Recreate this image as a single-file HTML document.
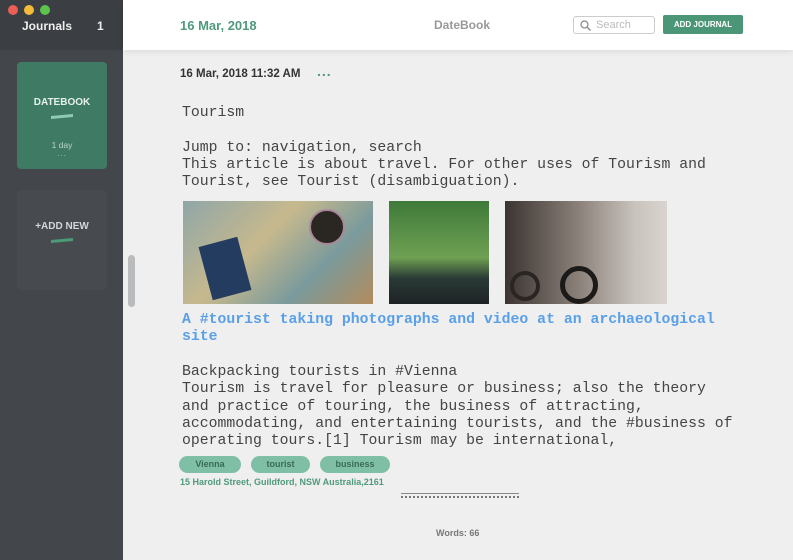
<!DOCTYPE html>
<html><head><style>
*{margin:0;padding:0;box-sizing:border-box}
body{width:793px;height:560px;overflow:hidden;background:#efefef;font-family:"Liberation Sans",sans-serif;position:relative}
.side{position:absolute;left:0;top:0;width:123px;height:560px;background:#43474c}
.sidehead{position:absolute;left:0;top:0;width:123px;height:50px;background:#3b3e42}
.dot{position:absolute;top:5px;width:10px;height:10px;border-radius:50%}
.card{position:absolute;left:17px;top:62px;width:90px;height:107px;background:#3f7a64;border-radius:4px;color:#e6f0ec;text-align:center}
.add{position:absolute;left:17px;top:190px;width:90px;height:100px;background:#474b50;border-radius:4px;color:#ccd;text-align:center}
.bar{position:absolute;top:0;height:50px;background:#fff;left:123px;width:670px;box-shadow:0 2px 6px rgba(0,0,0,.08)}
.mono{position:absolute;left:182px;font-family:"Liberation Mono",monospace;font-size:14.8px;line-height:17.3px;color:#444;white-space:pre}
.tag{position:absolute;top:456px;height:17px;background:#7fbfa6;border-radius:9px;font-size:9px;font-weight:bold;color:#3a6b58;text-align:center;line-height:17px}
</style></head><body>
<div class="side">
 <div class="sidehead">
  <div class="dot" style="left:8px;background:#ec5f57"></div>
  <div class="dot" style="left:24px;background:#f3bb3a"></div>
  <div class="dot" style="left:40px;background:#5cc44c"></div>
  <div style="position:absolute;left:22px;top:19px;color:#eee;font-size:12px;font-weight:bold">Journals</div>
  <div style="position:absolute;left:97px;top:19px;color:#eee;font-size:12px;font-weight:bold">1</div>
 </div>
 <div class="card">
  <div style="margin-top:35px;font-size:10px;font-weight:bold">DATEBOOK</div>
  <div style="width:22px;height:3px;background:#8fcab2;margin:7px auto 0;transform:skewY(-5deg)"></div>
  <div style="margin-top:22px;font-size:8.5px;color:#b8d6c9">1 day</div>
  <div style="font-size:8px;color:#9cc;letter-spacing:1px;line-height:8px">...</div>
 </div>
 <div class="add">
  <div style="margin-top:31px;font-size:10px;font-weight:bold;color:#d4d6d8">+ADD NEW</div>
  <div style="width:22px;height:3px;background:#4b9a78;margin:7px auto 0;transform:skewY(-5deg)"></div>
 </div>
</div>
<div style="position:absolute;left:128px;top:255px;width:7px;height:52px;background:#b9bbbd;border-radius:4px"></div>
<div class="bar">
 <div style="position:absolute;left:57px;top:18px;color:#4f9a7c;font-size:13px;font-weight:bold">16 Mar, 2018</div>
 <div style="position:absolute;left:311px;top:18px;color:#999;font-size:12px;font-weight:bold">DateBook</div>
 <div style="position:absolute;left:450px;top:16px;width:82px;height:18px;border:1px solid #ccc;border-radius:3px;font-size:11px;color:#bbb;line-height:16px;padding-left:22px">Search
  <svg style="position:absolute;left:6px;top:3px" width="11" height="11" viewBox="0 0 11 11"><circle cx="4.5" cy="4.5" r="3.5" fill="none" stroke="#888" stroke-width="1.2"/><path d="M7 7l3.5 3.5" stroke="#888" stroke-width="1.3"/></svg></div>
 <div style="position:absolute;left:540px;top:15px;width:80px;height:19px;background:#4a9677;border-radius:2px;color:#fff;font-size:8px;font-weight:bold;text-align:center;line-height:19px">ADD JOURNAL</div>
</div>
<div style="position:absolute;left:180px;top:68px;font-size:11.5px;color:#333;font-weight:bold">16 Mar, 2018 11:32 AM</div>
<div style="position:absolute;left:317px;top:63px;font-size:14px;color:#4f9a7c;font-weight:bold;letter-spacing:1px">...</div>
<div class="mono" style="top:105px">Tourism

Jump to: navigation, search
This article is about travel. For other uses of Tourism and
Tourist, see Tourist (disambiguation).</div>
<div style="position:absolute;left:183px;top:201px;width:190px;height:103px;background:linear-gradient(135deg,#8fa6a8,#c7b98d 40%,#7a9a9c 70%,#b28b5b)"><div style="position:absolute;left:126px;top:8px;width:36px;height:36px;border-radius:50%;background:#2a2622;border:2px solid #a89"></div><div style="position:absolute;left:22px;top:40px;width:40px;height:55px;background:#233c60;transform:rotate(-15deg)"></div></div>
<div style="position:absolute;left:389px;top:201px;width:100px;height:103px;background:linear-gradient(180deg,#3f7a3a,#6ea052 55%,#2a3a36 75%,#1d2224)"></div>
<div style="position:absolute;left:505px;top:201px;width:162px;height:103px;background:linear-gradient(90deg,#3b3430,#8a8079 45%,#c9c3bd 80%,#d9d4cf)"><div style="position:absolute;left:55px;top:65px;width:38px;height:38px;border-radius:50%;border:5px solid #1c1a19"></div><div style="position:absolute;left:5px;top:70px;width:30px;height:30px;border-radius:50%;border:4px solid #2a2522"></div></div>
<div class="mono" style="top:312px;color:#5aa0e8;font-weight:bold">A #tourist taking photographs and video at an archaeological
site</div>
<div class="mono" style="top:364px">Backpacking tourists in #Vienna
Tourism is travel for pleasure or business; also the theory
and practice of touring, the business of attracting,
accommodating, and entertaining tourists, and the #business of
operating tours.[1] Tourism may be international,</div>
<div class="tag" style="left:179px;width:62px">Vienna</div>
<div class="tag" style="left:251px;width:59px">tourist</div>
<div class="tag" style="left:320px;width:70px">business</div>
<div style="position:absolute;left:180px;top:477px;font-size:9px;font-weight:bold;color:#4f9a7c">15 Harold Street, Guildford, NSW Australia,2161</div>
<div style="position:absolute;left:401px;top:493px;width:118px;height:5px;border-top:1px solid #888;border-bottom:2px dotted #777"></div>
<div style="position:absolute;left:436px;top:528px;font-size:9px;font-weight:bold;color:#777">Words: 66</div>
</body></html>
